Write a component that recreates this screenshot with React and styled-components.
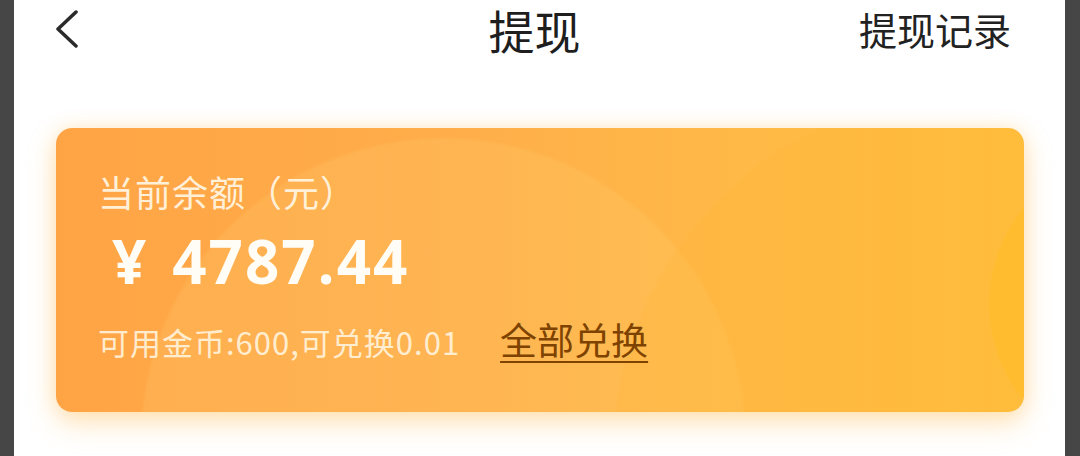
import React from 'react';
import styled, { createGlobalStyle } from 'styled-components';

const GlobalStyle = createGlobalStyle`
  html, body {
    margin: 0;
    padding: 0;
    background: #464646;
  }
  body {
    font-family: "Noto Sans CJK SC", "Noto Sans", sans-serif;
  }
`;

const Screen = styled.div`
  width: 1051px;
  height: 456px;
  margin-left: 14px;
  background: #ffffff;
  display: flex;
  flex-direction: column;
`;

const NavBar = styled.div`
  height: 50px;
  padding: 4px 54px 4px 38px;
  display: grid;
  grid-template-columns: 1fr auto 1fr;
  align-items: center;
  color: #222;
`;

const BackButton = styled.button`
  justify-self: start;
  border: 0;
  background: none;
  padding: 0;
  width: 30px;
  height: 40px;
  display: flex;
  align-items: center;
  justify-content: center;
  cursor: pointer;
`;

const Title = styled.div`
  font-size: 46px;
  font-weight: 400;
  line-height: 50px;
  padding-left: 6px;
  white-space: nowrap;
  color: #1e1e1e;
`;

const RecordLink = styled.a`
  justify-self: end;
  font-size: 38px;
  color: #222;
  text-decoration: none;
  line-height: 50px;
  white-space: nowrap;
`;

const Body = styled.div`
  padding: 70px 41px 0 42px;
`;

const BalanceCard = styled.div`
  height: 284px;
  border-radius: 16px;
  background:
    radial-gradient(circle at 112% 62%, rgba(255, 188, 30, 0.45) 0 150px, transparent 152px),
    radial-gradient(circle at 95% 115%, rgba(255, 180, 50, 0.22) 0 360px, transparent 364px),
    radial-gradient(circle at 40% 110%, rgba(255, 214, 120, 0.18) 0 300px, transparent 304px),
    linear-gradient(90deg, #ffa445 0%, #ffad4a 40%, #ffb947 70%, #ffbf3e 100%);
  box-shadow: 0 12px 28px rgba(255, 186, 80, 0.35), 0 0 18px rgba(255, 200, 110, 0.3);
  padding: 40px 42px 0 42px;
  box-sizing: border-box;
  display: flex;
  flex-direction: column;
`;

const Label = styled.div`
  font-size: 36px;
  color: rgba(255, 248, 230, 0.92);
  line-height: 46px;
  letter-spacing: 1px;
`;

const Amount = styled.div`
  margin: 12px 0 0 14px;
  font-family: "Open Sans", "Noto Sans", sans-serif;
  font-size: 60px;
  font-weight: 700;
  color: #fffdf6;
  line-height: 70px;
  letter-spacing: 2px;
`;

const Currency = styled.span`
  margin-right: 24px;
`;

const InfoRow = styled.div`
  margin-top: 16px;
  display: flex;
  align-items: baseline;
  gap: 40px;
`;

const CoinText = styled.span`
  font-size: 31px;
  color: rgba(255, 246, 225, 0.9);
  letter-spacing: 1px;
`;

const ExchangeLink = styled.a`
  font-size: 37px;
  color: #7e4300;
  text-decoration: underline;
  text-underline-offset: 6px;
  text-decoration-thickness: 2px;
`;

export default function App() {
  return (
    <>
      <GlobalStyle />
      <Screen>
        <NavBar>
          <BackButton aria-label="返回">
            <svg width="26" height="38" viewBox="0 0 26 38" fill="none">
              <path d="M22 2 L4 19 L22 36" stroke="#2a2a2a" strokeWidth="3.5" strokeLinecap="round" strokeLinejoin="round" />
            </svg>
          </BackButton>
          <Title>提现</Title>
          <RecordLink>提现记录</RecordLink>
        </NavBar>
        <Body>
          <BalanceCard>
            <Label>当前余额（元）</Label>
            <Amount>
              <Currency>¥</Currency>4787.44
            </Amount>
            <InfoRow>
              <CoinText>可用金币:600,可兑换0.01</CoinText>
              <ExchangeLink>全部兑换</ExchangeLink>
            </InfoRow>
          </BalanceCard>
        </Body>
      </Screen>
    </>
  );
}
